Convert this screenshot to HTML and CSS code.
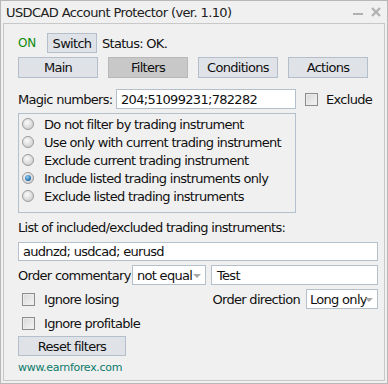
FILE: index.html
```html
<!DOCTYPE html>
<html>
<head>
<meta charset="utf-8">
<link rel="stylesheet" href="styles.css">
</head>
<body>
<div class="window">
  <div class="titlebar">
    <span class="title">USDCAD Account Protector (ver. 1.10)</span>
    <span class="tb-icons">
      <span class="minimize"></span>
      <svg class="close" width="10" height="10" viewBox="0 0 10 10"><path d="M1 1L9 9M9 1L1 9" stroke="#b0b0b0" stroke-width="2.2"/></svg>
    </span>
  </div>
  <div class="panel">
    <div class="row status-row">
      <span class="on">ON</span>
      <span class="btn switch">Switch</span>
      <span class="status">Status: OK.</span>
    </div>
    <div class="row tabs">
      <span class="btn tab">Main</span>
      <span class="btn tab active">Filters</span>
      <span class="btn tab">Conditions</span>
      <span class="btn tab">Actions</span>
    </div>
    <div class="row magic-row">
      <span class="label magic-label">Magic numbers:</span>
      <span class="input magic">204;51099231;782282</span>
      <span class="check"></span>
      <span class="label exclude">Exclude</span>
    </div>
    <div class="radio-box">
      <div class="radio-row"><span class="radio"></span><span>Do not filter by trading instrument</span></div>
      <div class="radio-row"><span class="radio"></span><span>Use only with current trading instrument</span></div>
      <div class="radio-row"><span class="radio"></span><span>Exclude current trading instrument</span></div>
      <div class="radio-row"><span class="radio selected"></span><span>Include listed trading instruments only</span></div>
      <div class="radio-row"><span class="radio"></span><span>Exclude listed trading instruments</span></div>
    </div>
    <div class="row list-label">List of included/excluded trading instruments:</div>
    <div class="row"><span class="input full">audnzd; usdcad; eurusd</span></div>
    <div class="row comment-row">
      <span class="label comment-label">Order commentary</span>
      <span class="input select cmp">not equal<span class="arrow"></span></span>
      <span class="input test">Test</span>
    </div>
    <div class="row dir-row">
      <span class="check"></span>
      <span class="label chk-label">Ignore losing</span>
      <span class="label dir-label">Order direction</span>
      <span class="input select dir">Long only<span class="arrow"></span></span>
    </div>
    <div class="row prof-row">
      <span class="check"></span>
      <span class="label chk-label">Ignore profitable</span>
    </div>
    <div class="row"><span class="btn reset">Reset filters</span></div>
    <div class="row site">www.earnforex.com</div>
  </div>
</div>
</body>
</html>
```
FILE: styles.css
```css
* { box-sizing: border-box; }
html, body { margin: 0; padding: 0; }
body {
  width: 388px;
  height: 384px;
  background: #f0f0f0;
  font-family: "DejaVu Sans", sans-serif;
  font-size: 13px;
  letter-spacing: -0.7px;
  color: #101010;
}
.window {
  width: 388px;
  height: 384px;
  border: 1px solid #b8b8b8;
  background: #f0f0f0;
  display: flex;
  flex-direction: column;
}
.titlebar {
  height: 22px;
  display: flex;
  align-items: center;
  justify-content: space-between;
  padding: 0 6px 0 5px;
}
.title { font-size: 13px; color: #202020; letter-spacing: -0.6px; }
.tb-icons { display: flex; align-items: center; gap: 8px; }
.minimize { width: 10px; height: 2px; background: #b0b0b0; margin-top: 3px; }
.panel {
  margin: 0 2px;
  height: 358px;
  border: 1px solid #c8c8c8;
  padding: 9px 6px 0 14px;
  display: flex;
  flex-direction: column;
}
.row { display: flex; align-items: center; }
.btn {
  display: flex;
  align-items: center;
  justify-content: center;
  height: 20px;
  background: #dfe3e8;
  border: 1px solid #b5bfcb;
  font-size: 13px;
}
.status-row { height: 20px; }
.on { color: #0a8a0a; width: 29px; font-size: 12px; letter-spacing: -0.3px; }
.switch { width: 50px; }
.status { margin-left: 5px; }
.tabs { margin-top: 4px; gap: 10px; height: 21px; }
.tab { width: 80px; height: 21px; }
.tab.active { background: #c8c8c8; border-color: #b8b8b8; }
.label { white-space: nowrap; }
.magic-row { margin-top: 11px; height: 20px; }
.magic-label { width: 98px; }
.input {
  display: flex;
  align-items: center;
  height: 20px;
  background: #fff;
  border: 1px solid #b4c0cc;
  padding-left: 4px;
  white-space: nowrap;
}
.magic { width: 180px; }
.check {
  width: 13px;
  height: 13px;
  border: 1px solid #8c8c8c;
  background: linear-gradient(135deg, #d8d8d8, #f4f4f4);
  box-shadow: inset 0 0 0 1px #ececec;
  flex: none;
}
.magic-row .check { margin-left: 9px; }
.exclude { margin-left: 8px; }
.radio-box {
  margin-top: 4px;
  width: 278px;
  height: 100px;
  border: 1px solid #b4c0cc;
  padding-top: 1px;
}
.radio-row {
  display: flex;
  align-items: center;
  height: 18px;
  white-space: nowrap;
}
.radio {
  width: 12px;
  height: 12px;
  border-radius: 50%;
  border: 1px solid #9a9a9a;
  background: radial-gradient(circle at 40% 35%, #fafafa, #d4d4d4 70%);
  margin: 0 10px 0 3px;
  flex: none;
  position: relative;
}
.radio.selected::after {
  content: "";
  position: absolute;
  left: 2px;
  top: 2px;
  width: 6px;
  height: 6px;
  border-radius: 50%;
  background: radial-gradient(circle at 40% 35%, #9cd0f0, #1a6ab0 70%, #0c3c70);
}
.list-label { margin-top: 7px; height: 14px; }
.list-label + .row { margin-top: 8px; }
.full { width: 360px; height: 19px; }
.comment-row { margin-top: 4px; height: 20px; }
.comment-label { width: 114px; }
.select { position: relative; padding-right: 12px; }
.arrow {
  position: absolute;
  right: 4px;
  top: 8px;
  width: 0;
  height: 0;
  border-left: 4px solid transparent;
  border-right: 4px solid transparent;
  border-top: 4px solid #a8a8a8;
}
.cmp { width: 74px; }
.test { width: 167px; margin-left: 5px; padding-left: 5px; }
.dir-row { margin-top: 4px; height: 20px; }
.dir-row .check, .prof-row .check { margin-left: 4px; }
.chk-label { margin-left: 9px; }
.dir-label { margin-left: auto; }
.dir { width: 72px; margin-left: 6px; padding-left: 3px; }
.prof-row { margin-top: 4px; height: 20px; }
.reset { width: 108px; margin-top: 3px; }
.site {
  margin-top: 5px;
  font-size: 11px;
  color: #0a7a6a;
  letter-spacing: -0.3px;
}
```
